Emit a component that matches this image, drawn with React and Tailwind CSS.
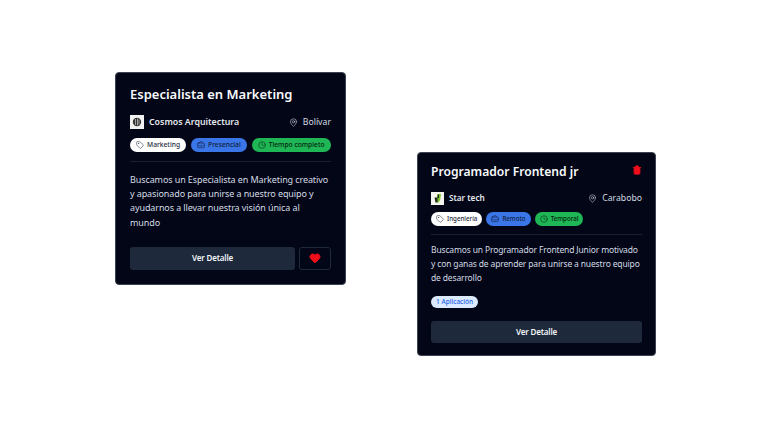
import React from "react";
import { Tag, BriefcaseBusiness, Clock, MapPin, Heart, Trash2 } from "lucide-react";

const font = { fontFamily: '"Noto Sans", sans-serif' };

function Chip({ icon: Icon, label, cls }) {
  return (
    <span className={`inline-flex h-[14px] items-center gap-[3px] whitespace-nowrap rounded-full font-medium leading-none ${cls}`}>
      {Icon && <Icon size={8} strokeWidth={1.6} />}
      {label}
    </span>
  );
}

function CosmosLogo() {
  return (
    <svg width="14" height="14" viewBox="0 0 14 14" className="shrink-0">
      <rect width="14" height="14" fill="#f3f3f3" />
      <circle cx="7" cy="7" r="4.2" fill="#333" />
      <path d="M5.5 4v6M7.5 3.5v7M9 4.5v5" stroke="#bbb" strokeWidth="0.8" />
    </svg>
  );
}

function StarLogo() {
  return (
    <svg width="13" height="13" viewBox="0 0 13 13" className="shrink-0">
      <rect width="13" height="13" fill="#f4f4ee" />
      <path d="M6.5 2h3.5l-.8 6-2.2 3-1.5-2z" fill="#7cc22e" />
      <path d="M3.5 5.5h3v5h-2z" fill="#1f2a1a" />
      <path d="M6.8 2.5h1.2v3.5H6.5z" fill="#1f2a1a" />
    </svg>
  );
}

function Meta({ logo, company, place, nameCls }) {
  return (
    <div className="flex items-center justify-between">
      <div className="flex items-center gap-[5px]">
        {logo}
        <span className={`font-semibold leading-none text-[#e6e9ee] ${nameCls}`}>{company}</span>
      </div>
      <div className="flex items-center gap-[5px] text-[#d5dbe4]">
        <MapPin size={9} strokeWidth={1.5} />
        <span className="text-[8.7px] leading-none">{place}</span>
      </div>
    </div>
  );
}

export default function App() {
  return (
    <div style={font} className="flex h-[432px] w-[768px] items-start overflow-hidden bg-white pl-[115px] pt-[72px]">
      <div className="flex h-[213px] w-[231px] flex-col rounded-[4px] border border-[#3b4252] bg-[#020617] px-[14px] pt-[11px]">
        <h2 className="text-[13px] font-semibold leading-[20px] text-[#f8fafc]">Especialista en Marketing</h2>
        <div className="mt-[11px]">
          <Meta logo={<CosmosLogo />} company="Cosmos Arquitectura" place="Bolívar" nameCls="text-[8.8px]" />
        </div>
        <div className="mt-[9px] flex gap-[5px]">
          <Chip icon={Tag} label="Marketing" cls="bg-white px-[6px] text-[6.7px] text-[#1e293b]" />
          <Chip icon={BriefcaseBusiness} label="Presencial" cls="bg-[#3b76e8] px-[6px] text-[6.7px] text-[#0f1d3a]" />
          <Chip icon={Clock} label="Tiempo completo" cls="bg-[#1fb655] px-[6px] text-[6.7px] text-[#06240f]" />
        </div>
        <div className="mt-[9px] h-px bg-[#1a2130]" />
        <p className="mt-[11px] text-[9px] leading-[14.2px] tracking-[-0.1px] text-[#d5dbe4]">
          Buscamos un Especialista en Marketing creativo y apasionado para unirse a nuestro equipo y ayudarnos a llevar nuestra visión única al mundo
        </p>
        <div className="mt-[17px] flex gap-[4px]">
          <button className="h-[23px] flex-1 rounded-[3px] bg-[#1e293b] text-[8px] font-semibold tracking-[-0.15px] text-[#f1f5f9]">Ver Detalle</button>
          <button className="flex h-[23px] w-[32px] items-center justify-center rounded-[3px] border border-[#1e293b]">
            <Heart size={12} fill="#ef0f1a" stroke="#ef0f1a" />
          </button>
        </div>
      </div>

      <div className="ml-[71px] mt-[80px] flex h-[204px] w-[239px] flex-col rounded-[4px] border border-[#3b4252] bg-[#020617] px-[13px] pt-[9px]">
        <div className="flex items-center justify-between">
          <h2 className="text-[12.1px] font-semibold leading-[20px] text-[#f8fafc]">Programador Frontend jr</h2>
          <Trash2 size={10} fill="#ef0f1a" stroke="#ef0f1a" className="mb-[4px]" />
        </div>
        <div className="mt-[10px]">
          <Meta logo={<StarLogo />} company="Star tech" place="Carabobo" nameCls="text-[8.2px]" />
        </div>
        <div className="mt-[7px] flex gap-[4px]">
          <Chip icon={Tag} label="Ingeniería" cls="bg-white px-[5px] text-[6.2px] text-[#1e293b]" />
          <Chip icon={BriefcaseBusiness} label="Remoto" cls="bg-[#3b76e8] px-[5px] text-[6.2px] text-[#0f1d3a]" />
          <Chip icon={Clock} label="Temporal" cls="bg-[#1fb655] px-[5px] text-[6.2px] text-[#06240f]" />
        </div>
        <div className="mt-[8px] h-px bg-[#1a2130]" />
        <p className="mt-[8px] text-[8.5px] leading-[13.8px] tracking-[-0.15px] text-[#d5dbe4]">
          Buscamos un Programador Frontend Junior motivado y con ganas de aprender para unirse a nuestro equipo de desarrollo
        </p>
        <div className="mt-[12px] flex">
          <span className="inline-flex h-[12px] items-center rounded-full bg-[#dbeafe] px-[5px] text-[6.5px] font-medium leading-none text-[#2563eb]">1 Aplicación</span>
        </div>
        <button className="mt-[13px] h-[22px] w-full rounded-[3px] bg-[#1e293b] text-[8px] font-semibold tracking-[-0.15px] text-[#f1f5f9]">Ver Detalle</button>
      </div>
    </div>
  );
}
